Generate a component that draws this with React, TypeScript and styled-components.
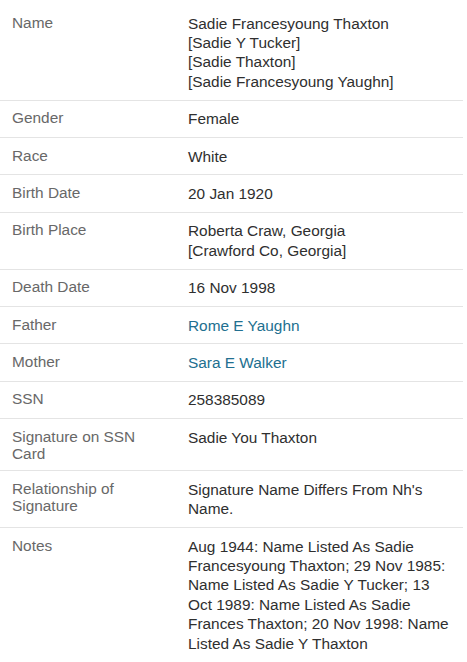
import { createGlobalStyle } from "styled-components";
import styled from "styled-components";

const GlobalStyle = createGlobalStyle`
  html, body {
    margin: 0;
    padding: 0;
    background: #ffffff;
  }
  body {
    font-family: "Liberation Sans", Arial, sans-serif;
  }
`;

type Value = { text: string; link?: boolean };

interface Fact {
  label: string;
  lines: Value[];
}

const facts: Fact[] = [
  {
    label: "Name",
    lines: [
      { text: "Sadie Francesyoung Thaxton" },
      { text: "[Sadie Y Tucker]" },
      { text: "[Sadie Thaxton]" },
      { text: "[Sadie Francesyoung Yaughn]" },
    ],
  },
  { label: "Gender", lines: [{ text: "Female" }] },
  { label: "Race", lines: [{ text: "White" }] },
  { label: "Birth Date", lines: [{ text: "20 Jan 1920" }] },
  {
    label: "Birth Place",
    lines: [{ text: "Roberta Craw, Georgia" }, { text: "[Crawford Co, Georgia]" }],
  },
  { label: "Death Date", lines: [{ text: "16 Nov 1998" }] },
  { label: "Father", lines: [{ text: "Rome E Yaughn", link: true }] },
  { label: "Mother", lines: [{ text: "Sara E Walker", link: true }] },
  { label: "SSN", lines: [{ text: "258385089" }] },
  { label: "Signature on SSN Card", lines: [{ text: "Sadie You Thaxton" }] },
  {
    label: "Relationship of Signature",
    lines: [{ text: "Signature Name Differs From Nh's Name." }],
  },
  {
    label: "Notes",
    lines: [
      {
        text:
          "Aug 1944: Name Listed As Sadie Francesyoung Thaxton; 29 Nov 1985: Name Listed As Sadie Y Tucker; 13 Oct 1989: Name Listed As Sadie Frances Thaxton; 20 Nov 1998: Name Listed As Sadie Y Thaxton",
      },
    ],
  },
];

const Page = styled.div`
  width: 463px;
  padding-top: 5px;
`;

const FactTable = styled.table`
  width: 100%;
  border-collapse: collapse;
  table-layout: fixed;
`;

const Row = styled.tr<{ $last?: boolean }>`
  border-bottom: ${({ $last }) => ($last ? "none" : "1px solid #e4e4e4")};
`;

const Label = styled.th`
  box-sizing: border-box;
  width: 188px;
  padding: 8.5px 20px 8.5px 12px;
  text-align: left;
  vertical-align: top;
  font-weight: 400;
  font-size: 15.4px;
  line-height: 17px;
  color: #686868;
`;

const Cell = styled.td`
  padding: 8.5px 12px 8.5px 0;
  vertical-align: top;
  font-size: 15.4px;
  line-height: 19.4px;
  color: #2f2f2f;
`;

const Line = styled.div`
  display: block;
`;

const PersonLink = styled.a`
  color: #226f90;
  text-decoration: none;
  cursor: pointer;
`;

export default function App() {
  return (
    <Page>
      <GlobalStyle />
      <FactTable>
        <tbody>
          {facts.map((fact, i) => (
            <Row key={fact.label} $last={i === facts.length - 1}>
              <Label>{fact.label}</Label>
              <Cell>
                {fact.lines.map((line) => (
                  <Line key={line.text}>
                    {line.link ? <PersonLink href="#">{line.text}</PersonLink> : line.text}
                  </Line>
                ))}
              </Cell>
            </Row>
          ))}
        </tbody>
      </FactTable>
    </Page>
  );
}
